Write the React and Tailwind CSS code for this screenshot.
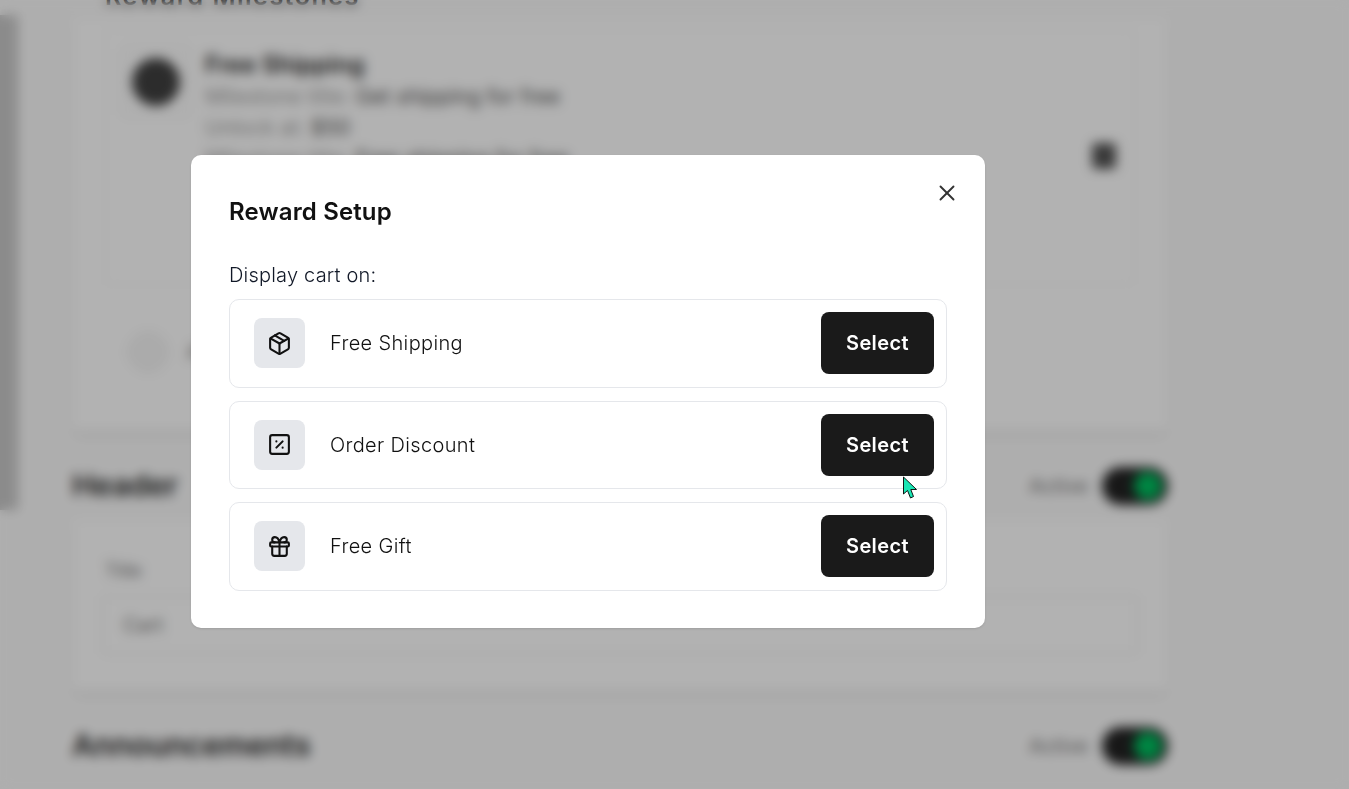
import React from "react";
import { Package, SquarePercent, Gift, X } from "lucide-react";

const rewards = [
  { label: "Free Shipping", icon: Package },
  { label: "Order Discount", icon: SquarePercent },
  { label: "Free Gift", icon: Gift },
];

function Toggle() {
  return (
    <div className="flex items-center gap-[14px]">
      <span className="text-[20px] text-neutral-500">Active</span>
      <div className="flex h-[38px] w-[66px] items-center justify-end rounded-full bg-[#222222] pr-[6px]">
        <div className="h-[28px] w-[28px] rounded-full bg-[#00c060]" />
      </div>
    </div>
  );
}

function BackgroundPage() {
  return (
    <div className="flex h-[789px] overflow-hidden bg-[#fafafa] font-['Inter',sans-serif]">
      <div className="w-[20px] shrink-0 pt-[15px]">
        <div className="h-[495px] w-[18px] bg-[#c8c8c8]" />
      </div>
      <div className="ml-[52px] flex w-[1096px] shrink-0 flex-col -mt-[22px]">
        <h2 className="h-[40px] pl-[33px] text-[25px] font-semibold tracking-[1.5px] text-neutral-800">Reward Milestones</h2>
        <div className="h-[414px] rounded-lg bg-white px-[33px] pt-[12px] shadow-md">
          <div className="flex h-[255px] items-start rounded-lg border border-neutral-100 pl-[17px] pr-[18px] pt-[18px]">
            <div className="flex h-[66px] w-[66px] shrink-0 items-center justify-center rounded border border-neutral-300">
              <div className="h-[48px] w-[48px] rounded-full bg-neutral-700" />
            </div>
            <div className="ml-[16px] flex-1 text-[21px] leading-[31px] text-neutral-400">
              <div className="text-[24px] font-semibold leading-[32px] text-neutral-800">Free Shipping</div>
              <div>Milestone title: <span className="text-neutral-600">Get shipping for free</span></div>
              <div>Unlock at: <span className="text-neutral-600">$50</span></div>
              <div>Milestone title: <span className="text-neutral-600">Free shipping for free</span></div>
            </div>
            <div className="mt-[94px] h-[26px] w-[24px] rounded bg-neutral-600" />
          </div>
          <div className="mt-[48px] flex items-center gap-[20px] pl-[24px]">
            <div className="h-[38px] w-[38px] rounded-full border border-neutral-300 bg-neutral-100" />
            <span className="text-[20px] text-neutral-500">Add</span>
          </div>
        </div>
        <div className="mt-[31px] flex items-center justify-between">
          <h2 className="text-[30px] font-semibold text-neutral-800">Header</h2>
          <Toggle />
        </div>
        <div className="mt-[12px] h-[172px] rounded-lg bg-white px-[30px] pt-[37px] shadow-md">
          <div className="pl-[3px] text-[18px] text-neutral-500">Title</div>
          <div className="mt-[12px] flex h-[58px] items-center rounded border border-neutral-200 pl-[20px] text-[20px] text-neutral-500">
            Cart
          </div>
        </div>
        <div className="mt-[31px] flex items-center justify-between">
          <h2 className="text-[30px] font-semibold text-neutral-800">Announcements</h2>
          <Toggle />
        </div>
      </div>
    </div>
  );
}

function RewardRow({ label, icon: Icon }) {
  return (
    <div className="flex h-[88.5px] items-center rounded-[10px] border border-[#e5e7eb] pl-[24px] pr-[12px]">
      <div className="flex h-[50px] w-[51px] items-center justify-center rounded-lg bg-[#e5e7eb]">
        <Icon size={25} strokeWidth={2} className="text-[#111111]" />
      </div>
      <span className="ml-[25px] flex-1 text-[20px] font-light tracking-[0.35px] text-[#111111]">{label}</span>
      <button className="h-[62px] w-[113px] rounded-lg bg-[#1a1a1a] text-[20px] font-semibold tracking-[0.4px] text-white">
        Select
      </button>
    </div>
  );
}

function Cursor() {
  return (
    <svg
      className="absolute left-[902px] top-[476px]"
      width="17"
      height="24"
      viewBox="0 0 17 24"
    >
      <path
        d="M1.5 1 L1.5 18 L5.5 14.5 L8.5 22 L11.5 20.5 L8.8 13.5 L14.5 13.5 Z"
        fill="#19e6b4"
        stroke="#000000"
        strokeWidth="0.9"
      />
    </svg>
  );
}

export default function App() {
  return (
    <div className="relative h-[789px] overflow-hidden">
      <BackgroundPage />
      <div className="absolute inset-0 bg-black/30 pl-[191px] pt-[155px] backdrop-blur-[6px]">
        <div className="relative h-[473px] w-[794px] rounded-[10px] bg-white px-[38px] pt-[41px] font-['Inter',sans-serif] shadow-sm">
          <button className="absolute right-[25px] top-[25px] text-[#333333]">
            <X size={26} strokeWidth={1.75} />
          </button>
          <h2 className="text-[24px] font-semibold leading-[32px] tracking-[0.15px] text-[#111111]">Reward Setup</h2>
          <p className="mt-[33px] text-[20px] font-light leading-[28px] tracking-[0.2px] text-[#111827]">Display cart on:</p>
          <div className="mt-[10px] flex flex-col gap-[13px]">
            {rewards.map((reward) => (
              <RewardRow key={reward.label} label={reward.label} icon={reward.icon} />
            ))}
          </div>
        </div>
      </div>
      <Cursor />
    </div>
  );
}
